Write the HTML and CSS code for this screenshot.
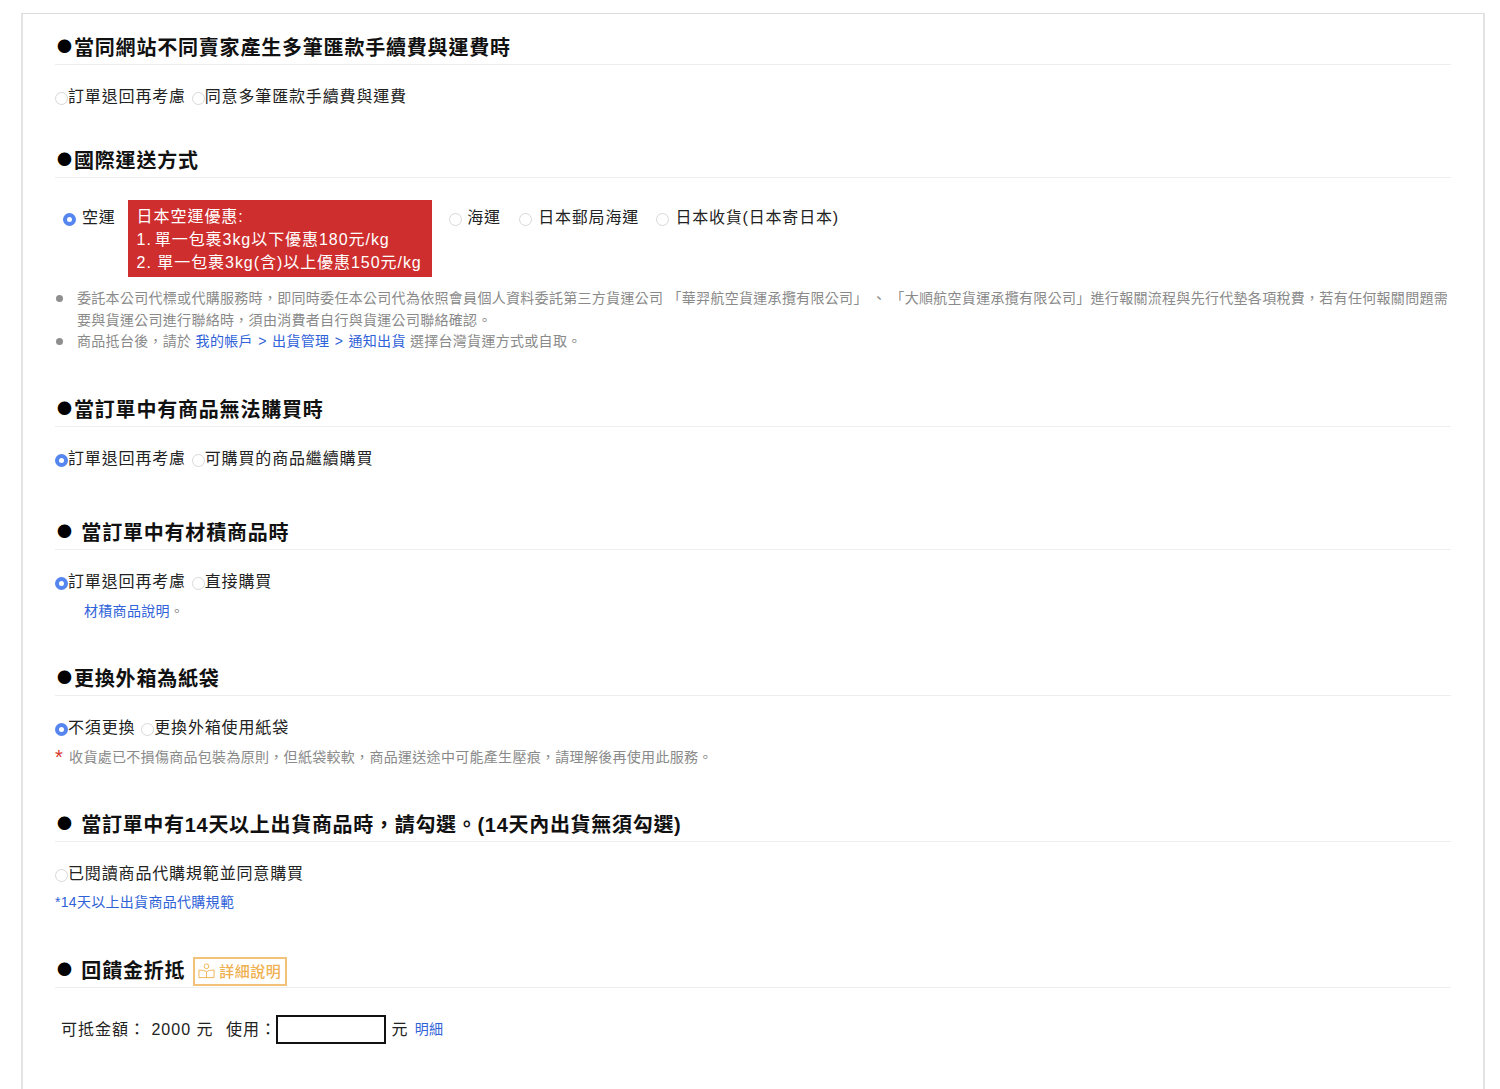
FILE: index.html
```html
<!DOCTYPE html>
<html lang="zh-Hant">
<head>
<meta charset="utf-8">
<title>訂單設定</title>
<link rel="stylesheet" href="styles.css">
</head>
<body>
<main class="panel">
  <section class="sec sec-a">
    <h2 class="title"><span class="dot">●</span>當同網站不同賣家產生多筆匯款手續費與運費時</h2>
    <div class="opts"><label class="opt"><input type="radio" class="radio" name="a">訂單退回再考慮</label> <label class="opt"><input type="radio" class="radio" name="a">同意多筆匯款手續費與運費</label></div>
  </section>

  <section class="sec sec-b">
    <h2 class="title"><span class="dot">●</span>國際運送方式</h2>
    <div class="ship">
      <label class="ship-opt first"><input type="radio" class="radio" name="b" checked>空運</label>
      <div class="promo">
        <div class="promo-h">日本空運優惠:</div>
        <div class="promo-1">1. 單一包裹3kg以下優惠180元/kg</div>
        <div>2. 單一包裹3kg(含)以上優惠150元/kg</div>
      </div>
      <label class="ship-opt sea"><input type="radio" class="radio" name="b">海運</label>
      <label class="ship-opt jp"><input type="radio" class="radio" name="b">日本郵局海運</label>
      <label class="ship-opt rcv"><input type="radio" class="radio" name="b">日本收貨(日本寄日本)</label>
    </div>
    <ul class="notes">
      <li>委託本公司代標或代購服務時，即同時委任本公司代為依照會員個人資料委託第三方貨運公司 「華羿航空貨運承攬有限公司」&nbsp;、 「大順航空貨運承攬有限公司」進行報關流程與先行代墊各項稅費，若有任何報關問題需要與貨運公司進行聯絡時，須由消費者自行與貨運公司聯絡確認。</li>
      <li>商品抵台後，請於 <a class="link" href="#">我的帳戶 &gt; 出貨管理 &gt; 通知出貨</a> 選擇台灣貨運方式或自取。</li>
    </ul>
  </section>

  <section class="sec sec-c">
    <h2 class="title"><span class="dot">●</span>當訂單中有商品無法購買時</h2>
    <div class="opts"><label class="opt"><input type="radio" class="radio" name="c" checked>訂單退回再考慮</label> <label class="opt"><input type="radio" class="radio" name="c">可購買的商品繼續購買</label></div>
  </section>

  <section class="sec sec-d">
    <h2 class="title"><span class="dot">●</span> 當訂單中有材積商品時</h2>
    <div class="opts"><label class="opt"><input type="radio" class="radio" name="d" checked>訂單退回再考慮</label> <label class="opt"><input type="radio" class="radio" name="d">直接購買</label></div>
    <p class="sub indent"><a class="link" href="#">材積商品說明</a><span class="muted">。</span></p>
  </section>

  <section class="sec sec-e">
    <h2 class="title"><span class="dot">●</span>更換外箱為紙袋</h2>
    <div class="opts"><label class="opt"><input type="radio" class="radio" name="e" checked>不須更換</label> <label class="opt"><input type="radio" class="radio" name="e">更換外箱使用紙袋</label></div>
    <p class="sub muted"><span class="star">*</span>收貨處已不損傷商品包裝為原則，但紙袋較軟，商品運送途中可能產生壓痕，請理解後再使用此服務。</p>
  </section>

  <section class="sec sec-f">
    <h2 class="title title-long"><span class="dot">●</span> 當訂單中有14天以上出貨商品時，請勾選。(14天內出貨無須勾選)</h2>
    <div class="opts"><label class="opt"><input type="radio" class="radio" name="f">已閱讀商品代購規範並同意購買</label></div>
    <p class="sub sub-tight"><a class="link" href="#">*14天以上出貨商品代購規範</a></p>
  </section>

  <section class="sec sec-g">
    <h2 class="title title-btn"><span class="dot">●</span> 回饋金折抵<a class="detail" href="#">
        <svg class="book" viewBox="0 0 18 18" width="17" height="17" fill="none" stroke="#efb050" stroke-width="1" aria-hidden="true">
          <circle cx="9" cy="3.500" r="2.500"/>
          <path d="M9 9.500C7.500 8 4.500 7.500 1 7.500V15.500H17V7.500C13.500 7.500 10.500 8 9 9.500V15.500"/>
        </svg>詳細說明</a></h2>
    <div class="rebate"><span>可抵金額： 2000 元</span><span class="use">使用：</span><input class="amount" type="text" aria-label="使用金額"><span>元</span><a class="link" href="#">明細</a></div>
  </section>
</main>
</body>
</html>
```

FILE: styles.css
```css
* { box-sizing: border-box; }
html, body { margin: 0; padding: 0; background: #fff; height: 1089px; overflow: hidden; }
body {
  font-family: "Liberation Sans", "Noto Sans CJK TC", sans-serif;
  color: #222;
  padding: 13px 15px 0 21px;
}
.panel {
  height: 1076px;
  border: 2px solid #e4e4e4;
  border-width: 1px 2px 0;
  border-top-color: #dcdcdc;
  padding: 0 32px 0 32px;
}
.sec { display: block; }
.title {
  margin: 0;
  height: 26px;
  box-sizing: content-box;
  font-size: 20px;
  line-height: 26px;
  font-weight: 700;
  letter-spacing: .8px;
  word-spacing: 1px;
  color: #111;
  border-bottom: 1px solid #eee;
  padding: 1px 0 3px;
  white-space: nowrap;
}
.title-long { letter-spacing: .7px; }
.dot {
  display: inline-block;
  width: 19px;
  font-family: "Noto Sans CJK TC", sans-serif;
  font-size: 15px;
  line-height: 15px;
  font-weight: 400;
  text-align: center;
  vertical-align: 3px;
  color: #000;
  letter-spacing: 0;
}
.sec-a { height: 120px; padding-top: 20px; }
.sec-b { height: 249px; padding-top: 13px; }
.sec-c { height: 123px; padding-top: 13px; }
.sec-d { height: 146px; padding-top: 13px; }
.sec-e { height: 146px; padding-top: 13px; }
.sec-f { height: 146px; padding-top: 13px; }
.sec-g { padding-top: 13px; }

.opts {
  margin-top: 21px;
  font-size: 16px;
  line-height: 22px;
  letter-spacing: .85px;
  color: #222;
}
.opt { display: inline; }
.opt + .opt { margin-left: .5px; }
.radio {
  appearance: none;
  -webkit-appearance: none;
  display: inline-block;
  width: 13px;
  height: 13px;
  margin: 0;
  border: 1px solid #d8d8d8;
  border-radius: 50%;
  background: #fff;
  vertical-align: -3px;
}
.radio:checked { border: 4px solid #5585ee; }

.ship {
  display: flex;
  align-items: flex-start;
  margin-top: 22px;
  font-size: 16px;
  line-height: 22px;
  letter-spacing: .8px;
}
.ship-opt { display: flex; align-items: center; margin-top: 7px; white-space: nowrap; }
.ship-opt .radio { margin-top: 2px; margin-right: 6px; }
.first { margin-left: 8px; }
.promo {
  width: 304px;
  height: 77px;
  margin-left: 12px;
  padding: 5px 0 0 9px;
  background: #cf2e2e;
  color: #fff;
  line-height: 23px;
  letter-spacing: .95px;
  white-space: nowrap;
}
.promo-1 { word-spacing: -2.5px; }
.sea { margin-left: 17.6px; }
.ship-opt.sea .radio { margin-right: 5px; }
.jp { margin-left: 18.4px; }
.rcv { margin-left: 17.4px; }

.notes {
  margin: 11px 0 0;
  padding: 0 0 0 22px;
  list-style: none;
  font-size: 14px;
  line-height: 21.6px;
  letter-spacing: .3px;
  color: #8a8a8a;
}
.notes li { position: relative; }
.notes li::before {
  content: "";
  position: absolute;
  left: -21px;
  top: 7px;
  width: 7px;
  height: 7px;
  border-radius: 50%;
  background: #8e8e8e;
}
.link { color: #2f62d8; text-decoration: none; }
.notes .link { word-spacing: 1.2px; }
.muted { color: #8a8a8a; }
.sub {
  margin: 8px 0 0;
  font-size: 14px;
  line-height: 21px;
  letter-spacing: .3px;
}
.sub-tight { margin-top: 7px; }
.indent { padding-left: 29px; }
.star { color: #d9342b; font-size: 20px; line-height: 14px; vertical-align: -2px; margin-right: 6px; }

.title-btn { white-space: pre; }
.detail {
  display: inline-flex;
  align-items: center;
  gap: 4px;
  height: 29px;
  margin: -1px 0 0 8px;
  padding: 0 4px 0 3px;
  border: 2px solid #f3c27a;
  font-size: 15px;
  font-weight: 500;
  letter-spacing: .5px;
  word-spacing: 0;
  color: #efb050;
  text-decoration: none;
  vertical-align: top;
}
.rebate {
  display: flex;
  align-items: center;
  margin: 27px 0 0 6px;
  font-size: 16px;
  line-height: 29px;
  letter-spacing: 1px;
  white-space: pre;
}
.use { margin-left: 12.600px; }
.amount {
  width: 110px;
  height: 29px;
  margin: 0 6px 0 -1.500px;
  border: 2px solid #111;
  background: #fff;
}
.rebate .link { font-size: 14px; margin-left: 6px; letter-spacing: .3px; }
```
